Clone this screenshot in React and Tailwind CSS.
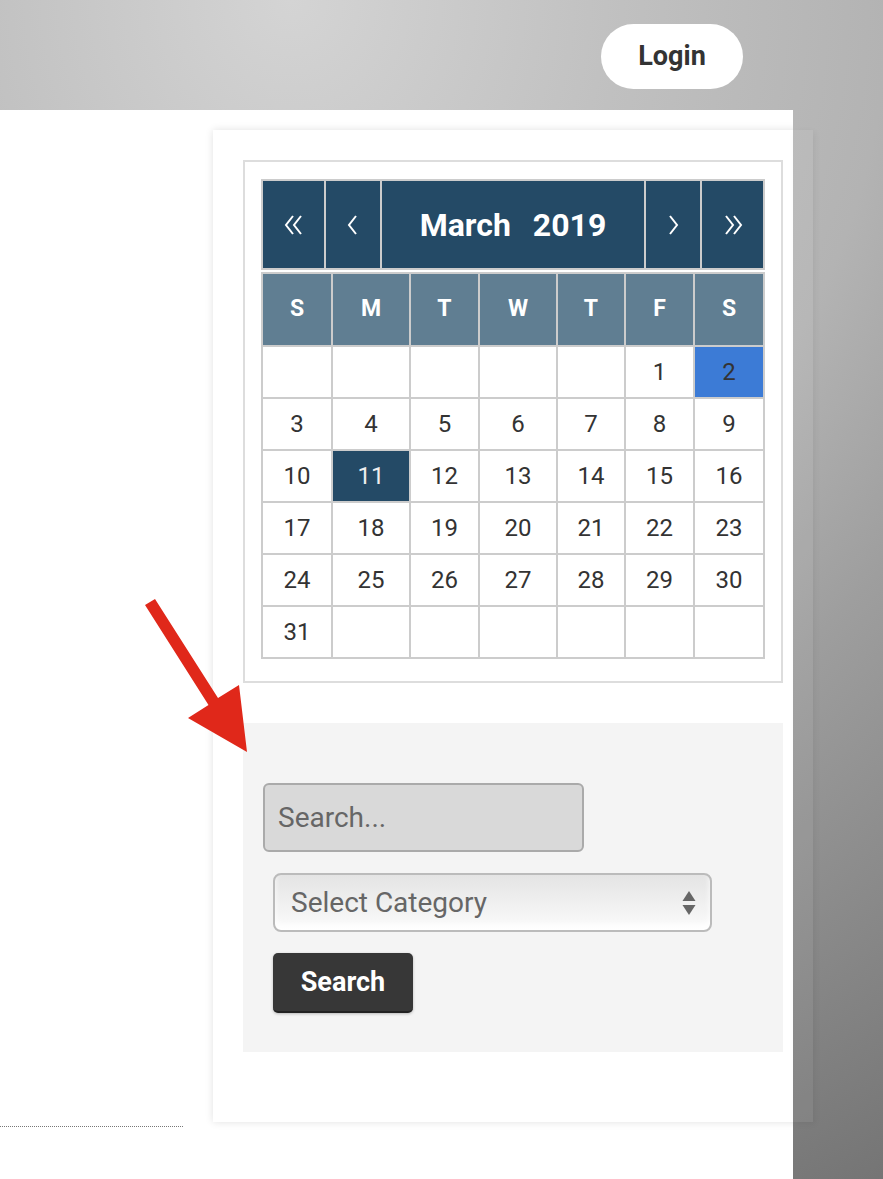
import React from "react";

const dayCols = "grid-cols-[68px_76px_67px_76px_66px_67px_68px]";

const weekdays = ["S", "M", "T", "W", "T", "F", "S"];

const weeks = [
  [null, null, null, null, null, 1, 2],
  [3, 4, 5, 6, 7, 8, 9],
  [10, 11, 12, 13, 14, 15, 16],
  [17, 18, 19, 20, 21, 22, 23],
  [24, 25, 26, 27, 28, 29, 30],
  [31, null, null, null, null, null, null],
];

// thin chevron used in the month nav; dir -1 = left, 1 = right
const Chevron = ({ dir, double }) => (
  <svg width={double ? 20 : 12} height="22" viewBox={double ? "0 0 20 22" : "0 0 12 22"} fill="none" stroke="white" strokeWidth="2">
    {dir < 0 ? (
      <>
        <polyline points="9,2 2,11 9,20" />
        {double && <polyline points="17,2 10,11 17,20" />}
      </>
    ) : (
      <>
        <polyline points="3,2 10,11 3,20" />
        {double && <polyline points="11,2 18,11 11,20" />}
      </>
    )}
  </svg>
);

const Calendar = () => {
  return (
    <div className="border-2 border-[#dddddd] pt-[17px] pl-[16px] pr-[15px] pb-[22px]">
      {/* month header */}
      <div className="grid grid-cols-[61px_54px_262px_54px_61px] gap-[2px] p-[2px] bg-[#cccccc] w-[504px]">
        <div className="h-[87px] bg-[#244a66] flex items-center justify-center"><Chevron dir={-1} double /></div>
        <div className="h-[87px] bg-[#244a66] flex items-center justify-center"><Chevron dir={-1} /></div>
        <div className="h-[87px] bg-[#244a66] text-white text-[32px] font-bold flex items-center justify-center gap-[22px]">
          <span>March</span>
          <span>2019</span>
        </div>
        <div className="h-[87px] bg-[#244a66] flex items-center justify-center"><Chevron dir={1} /></div>
        <div className="h-[87px] bg-[#244a66] flex items-center justify-center"><Chevron dir={1} double /></div>
      </div>

      {/* days */}
      <div className={`mt-[2px] grid ${dayCols} gap-[2px] p-[2px] bg-[#cccccc] w-[504px]`}>
        {weekdays.map((d, i) => (
          <div key={i} className="h-[71px] bg-[#607e92] text-white text-[23px] font-bold flex items-center justify-center">
            {d}
          </div>
        ))}
        {weeks.flat().map((d, i) => {
          let cls = "bg-white text-[#333333]";
          if (d === 2) cls = "bg-[#3c7bd6] text-[#333333]";
          if (d === 11) cls = "bg-[#244a66] text-[#eeeeee]";
          return (
            <div key={i} className={`h-[50px] text-[24px] flex items-center justify-center ${cls}`}>
              {d}
            </div>
          );
        })}
      </div>
    </div>
  );
};

const SearchBox = () => {
  return (
    <div className="mt-[40px] h-[329px] bg-[#f4f4f4] pt-[60px] pl-[20px]">
      <div className="w-[321px] h-[69px] rounded-[6px] border-2 border-[#aaaaaa] bg-[#d9d9d9] flex items-center pl-[13px] text-[28px] text-[#666666]">
        Search...
      </div>
      <div className="ml-[10px] mt-[21px] w-[439px] h-[59px] rounded-[8px] border-2 border-[#bbbbbb] bg-gradient-to-b from-[#e4e4e4] to-[#fbfbfb] shadow-[inset_0_-6px_6px_rgba(255,255,255,0.9)] flex items-center justify-between pl-[16px] pr-[14px] text-[28px] text-[#666666]">
        <span>Select Category</span>
        <svg width="14" height="26" viewBox="0 0 14 26">
          <polygon points="7,1 13.5,11 0.5,11" fill="#666666" />
          <polygon points="0.5,15 13.5,15 7,25" fill="#666666" />
        </svg>
      </div>
      <button className="ml-[10px] mt-[21px] w-[140px] h-[60px] rounded-[5px] bg-[#373737] border-b-2 border-[#222222] shadow-[0_1px_3px_rgba(0,0,0,0.25)] text-white text-[27px] font-bold">
        Search
      </button>
    </div>
  );
};

export default function App() {
  return (
    <div className="relative w-[883px] h-[1179px] overflow-hidden flex flex-col font-['Roboto',sans-serif] bg-[radial-gradient(ellipse_150%_120%_at_33%_0%,#d4d4d4_0%,#c0c0c0_25%,#b3b3b3_45%,#9e9e9e_60%,#868686_80%,#6e6e6e_100%)]">
      <header className="h-[110px] shrink-0 flex justify-end items-start pt-[24px] pr-[140px]">
        <button className="w-[142px] h-[65px] rounded-full bg-white text-[#333333] text-[27px] font-bold">
          Login
        </button>
      </header>

      <div className="flex flex-1">
        <main className="w-[793px] bg-white overflow-hidden">
          <div className="flex items-start pt-[20px]">
            <div className="w-[183px] shrink-0 h-[997px] border-b border-dotted border-[#777777]"></div>
            <aside className="ml-[30px] w-[600px] shrink-0 h-[992px] bg-white shadow-[0_0_8px_rgba(0,0,0,0.12)] pt-[30px] px-[30px]">
              <Calendar />
              <SearchBox />
            </aside>
          </div>
        </main>
        <div className="flex-1 pt-[20px]">
          <div className="w-[20px] h-[992px] bg-white/5 shadow-[2px_2px_6px_rgba(0,0,0,0.06)]"></div>
        </div>
      </div>

      {/* red pointer arrow */}
      <svg className="absolute left-0 top-0 pointer-events-none" width="883" height="1179">
        <polygon
          points="145,605 155,599 218,698 239,685 247,752 188,718 208.5,705"
          fill="#e0281a"
        />
      </svg>
    </div>
  );
}
